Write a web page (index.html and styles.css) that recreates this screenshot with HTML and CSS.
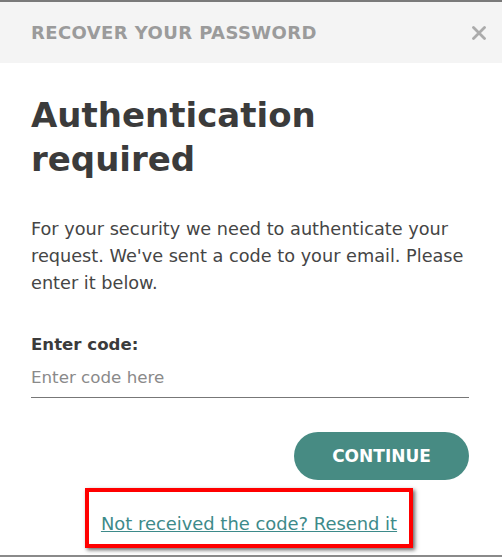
FILE: index.html
```html
<!DOCTYPE html>
<html>
<head>
<meta charset="utf-8">
<link rel="stylesheet" href="styles.css">
</head>
<body>
<div class="modal">
  <div class="modal-header">
    <span class="modal-title">RECOVER YOUR PASSWORD</span>
    <svg class="close" width="14" height="14" viewBox="0 0 14 14"><path d="M1.5 1.5 L12.5 12.5 M12.5 1.5 L1.5 12.5" stroke="#ababab" stroke-width="2.8" stroke-linecap="round"/></svg>
  </div>
  <div class="modal-body">
    <h1 class="heading">Authentication<br>required</h1>
    <p class="intro">For your security we need to authenticate your request. We've sent a code to your email. Please enter it below.</p>
    <label class="label">Enter code:</label>
    <div class="input">Enter code here</div>
    <div class="actions">
      <button class="btn">CONTINUE</button>
    </div>
    <div class="resend-row">
      <div class="highlight"><a class="resend" href="#">Not received the code? Resend it</a></div>
    </div>
  </div>
</div>
</body>
</html>
```
FILE: styles.css
```css
* { box-sizing: border-box; }
html, body { margin: 0; padding: 0; background: #fff; }
body { font-family: "DejaVu Sans", "Open Sans", sans-serif; width: 502px; height: 557px; overflow: hidden; }
.modal { border-top: 2px solid #7a7a7a; border-bottom: 2px solid #8a8a8a; height: 557px; display: flex; flex-direction: column; }
.modal-header { background: #f4f4f4; height: 61px; display: flex; align-items: center; justify-content: space-between; padding: 0 16px 0 31px; }
.modal-title { font-weight: 700; font-size: 18px; letter-spacing: 0.4px; color: #9b9b9b; }
.close { display: block; margin-top: 1px; }
.modal-body { padding: 0 33px 0 31px; flex: 1; }
.heading { margin: 30px 0 0; font-size: 34px; line-height: 44px; font-weight: 700; color: #3b3b3b; }
.intro { margin: 35px 0 0; font-size: 17.7px; line-height: 27px; color: #454545; }
.label { display: block; margin-top: 38px; font-size: 16.6px; font-weight: 700; color: #3b3b3b; }
.input { margin-top: 13px; font-size: 16.7px; color: #8a8a8a; padding-bottom: 10px; border-bottom: 1px solid #777; }
.actions { display: flex; justify-content: flex-end; margin-top: 34px; }
.btn { width: 175px; height: 48px; border: none; border-radius: 24px; background: #478b83; color: #fff; font-family: inherit; font-size: 17px; font-weight: 700; }
.resend-row { display: flex; justify-content: center; margin-top: 8px; padding-right: 2px; }
.highlight { border: 4px solid #f00; width: 328px; height: 60px; display: flex; align-items: flex-end; justify-content: center; padding-bottom: 10px; box-shadow: 2px 2px 4px rgba(0,0,0,0.6); }
.resend { color: #3d8a8a; font-size: 17.9px; text-decoration: underline; }
```
